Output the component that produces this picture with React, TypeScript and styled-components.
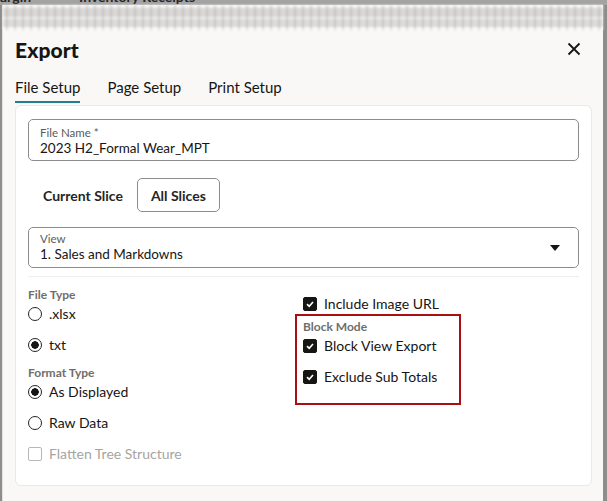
import styled, { createGlobalStyle } from 'styled-components';

const GlobalStyle = createGlobalStyle`
	html, body {
		margin: 0;
		padding: 0;
		height: 100%;
		background: #8d8d8d;
		overflow: hidden;
	}
	body {
		font-family: Lato, 'Noto Sans', sans-serif;
		color: #161513;
	}
	#root {
		height: 100%;
	}
`;

function Radio({ checked, label }: { checked?: boolean; label: string }) {
	return (
		<OptionRow>
			<RadioCircle $checked={checked} />
			<OptionText>{label}</OptionText>
		</OptionRow>
	);
}

function Check({ checked, disabled, label }: { checked?: boolean; disabled?: boolean; label: string }) {
	return (
		<OptionRow $disabled={disabled}>
			<CheckBox $checked={checked} $disabled={disabled}>
				{checked && (
					<svg width="10" height="10" viewBox="0 0 10 10">
						<path d="M2 5.2 L4.2 7.3 L8 2.9" fill="none" stroke="#fff" strokeWidth="1.6" />
					</svg>
				)}
			</CheckBox>
			<OptionText>{label}</OptionText>
		</OptionRow>
	);
}

function App() {
	return (
		<>
			<GlobalStyle />
			<Page>
				<PageBar>
					<PageBarText>argin</PageBarText>
					<PageBarText>Inventory Receipts</PageBarText>
				</PageBar>
				<Dialog>
					{/* table rows behind the frosted dialog header */}
					<Haze />
					<Header>
						<Title>Export</Title>
						<CloseButton aria-label="Close">
							<svg width="14" height="14" viewBox="0 0 14 14">
								<path d="M1.5 1.5 L12.5 12.5 M12.5 1.5 L1.5 12.5" stroke="#161513" strokeWidth="1.8" />
							</svg>
						</CloseButton>
					</Header>
					<Tabs>
						<Tab $active>File Setup</Tab>
						<Tab>Page Setup</Tab>
						<Tab>Print Setup</Tab>
					</Tabs>
					<Card>
						<Field>
							<FieldLabel>File Name *</FieldLabel>
							<FieldValue>2023 H2_Formal Wear_MPT</FieldValue>
						</Field>
						<SliceRow>
							<SliceButton>Current Slice</SliceButton>
							<SliceButton $selected>All Slices</SliceButton>
						</SliceRow>
						<SelectField>
							<div>
								<FieldLabel>View</FieldLabel>
								<FieldValue>1. Sales and Markdowns</FieldValue>
							</div>
							<svg width="10" height="6" viewBox="0 0 10 6">
								<path d="M0 0 H10 L5 6 Z" fill="#161513" />
							</svg>
						</SelectField>
						<Options>
							<Column>
								<GroupLabel>File Type</GroupLabel>
								<Radio label=".xlsx" />
								<Radio checked label="txt" />
								<GroupLabel $gapTop>Format Type</GroupLabel>
								<Radio checked label="As Displayed" />
								<Radio label="Raw Data" />
								<Check disabled label="Flatten Tree Structure" />
							</Column>
							<Column>
								<Inset>
									<Check checked label="Include Image URL" />
								</Inset>
								<BlockGroup>
									<GroupLabel>Block Mode</GroupLabel>
									<Check checked label="Block View Export" />
									<Check checked label="Exclude Sub Totals" />
								</BlockGroup>
							</Column>
						</Options>
					</Card>
				</Dialog>
			</Page>
		</>
	);
}

const Page = styled.div`
	display: flex;
	flex-direction: column;
	height: 100%;
`;

const PageBar = styled.div`
	display: flex;
	gap: 48px;
	height: 5px;
	overflow: hidden;
	background: #a3a3a3;
`;

const PageBarText = styled.span`
	margin-top: -11px;
	font-size: 14px;
	font-weight: 700;
	line-height: 16px;
	color: #262524;
	white-space: nowrap;
`;

const Dialog = styled.div`
	flex: 1;
	display: flex;
	flex-direction: column;
	margin: 0 4px 0 2px;
	background: #f9f8f6;
	border-left: 1px solid #e4e2df;
`;

const Haze = styled.div`
	height: 25px;
	background:
		repeating-linear-gradient(90deg, transparent 0 3px, rgba(160, 158, 155, 0.35) 3px 5px, transparent 5px 8px),
		linear-gradient(180deg, #f3f2f0 0 3px, #d9d8d6 3px 12px, #f1f0ee 12px 14px, #dcdbd9 14px 22px, #f9f8f6 22px);
	filter: blur(0.8px);
`;

const Header = styled.div`
	display: flex;
	align-items: center;
	justify-content: space-between;
	padding: 4px 22px 0 12px;
	height: 30px;
`;

const Title = styled.h1`
	margin: 0;
	font-size: 21px;
	font-weight: 900;
	letter-spacing: 0.1px;
`;

const CloseButton = styled.button`
	display: flex;
	border: none;
	background: none;
	padding: 0;
	cursor: pointer;
`;

const Tabs = styled.div`
	display: flex;
	gap: 27px;
	padding: 14px 0 0 12px;
`;

const Tab = styled.div<{ $active?: boolean }>`
	font-size: 15px;
	line-height: 18px;
	padding-bottom: 5px;
	color: #161513;
	border-bottom: 2.5px solid ${(p) => (p.$active ? '#227e8c' : 'transparent')};
`;

const Card = styled.div`
	flex: 1;
	display: flex;
	flex-direction: column;
	margin: 2px 11px 15px 12px;
	padding: 13px 12px 0 12px;
	background: #fff;
	border: 1px solid #ebe9e6;
	border-radius: 6px;
`;

const Field = styled.div`
	height: 42px;
	box-sizing: border-box;
	padding: 6px 11px 0;
	border: 1px solid #8e8c89;
	border-radius: 5px;
`;

const FieldLabel = styled.div`
	font-size: 11.5px;
	line-height: 13px;
	color: #5c5b58;
`;

const FieldValue = styled.div`
	font-size: 13.5px;
	line-height: 18px;
	color: #161513;
`;

const SliceRow = styled.div`
	display: flex;
	gap: 4px;
	margin: 17px 0 15px 5px;
`;

const SliceButton = styled.div<{ $selected?: boolean }>`
	display: flex;
	align-items: center;
	height: 34px;
	box-sizing: border-box;
	padding: 0 ${(p) => (p.$selected ? '13px' : '9px')};
	font-size: 14px;
	font-weight: 700;
	color: #262524;
	border: 1px solid ${(p) => (p.$selected ? '#8e8c89' : 'transparent')};
	border-radius: 5px;
`;

const SelectField = styled(Field)`
	display: flex;
	align-items: center;
	justify-content: space-between;
	padding: 0 18px 0 11px;
	height: 41px;
`;

const Options = styled.div`
	display: grid;
	grid-template-columns: 267px 1fr;
	margin-top: 8px;
	padding-top: 11px;
	border-top: 1px solid #efeeec;
`;

const Column = styled.div`
	display: flex;
	flex-direction: column;
	align-items: flex-start;
`;

const GroupLabel = styled.div<{ $gapTop?: boolean }>`
	font-size: 12px;
	line-height: 14px;
	font-weight: 700;
	color: #6f6e6b;
	margin-top: ${(p) => (p.$gapTop ? '6px' : '0')};
	margin-bottom: -4px;
`;

const OptionRow = styled.div<{ $disabled?: boolean }>`
	display: flex;
	align-items: center;
	gap: 7px;
	height: 31px;
	color: ${(p) => (p.$disabled ? '#a6a5a2' : '#161513')};
`;

const OptionText = styled.span`
	font-size: 14px;
	line-height: 18px;
`;

const RadioCircle = styled.span<{ $checked?: boolean }>`
	width: 14px;
	height: 14px;
	box-sizing: border-box;
	border: 1.5px solid #262524;
	border-radius: 50%;
	background: ${(p) => (p.$checked ? 'radial-gradient(circle, #161513 0 3.5px, transparent 4px)' : 'transparent')};
`;

const CheckBox = styled.span<{ $checked?: boolean; $disabled?: boolean }>`
	display: flex;
	align-items: center;
	justify-content: center;
	width: 14px;
	height: 14px;
	box-sizing: border-box;
	border-radius: 2px;
	border: 1px solid ${(p) => (p.$disabled ? '#b8b7b4' : '#161513')};
	background: ${(p) => (p.$checked ? '#161513' : 'transparent')};
`;

const Inset = styled.div`
	padding-left: 8px;
	margin-bottom: -5px;
`;

const BlockGroup = styled.div`
	display: flex;
	flex-direction: column;
	width: 150px;
	padding: 4px 6px 11px;
	border: 2px solid #a80f12;
`;

export default App;
